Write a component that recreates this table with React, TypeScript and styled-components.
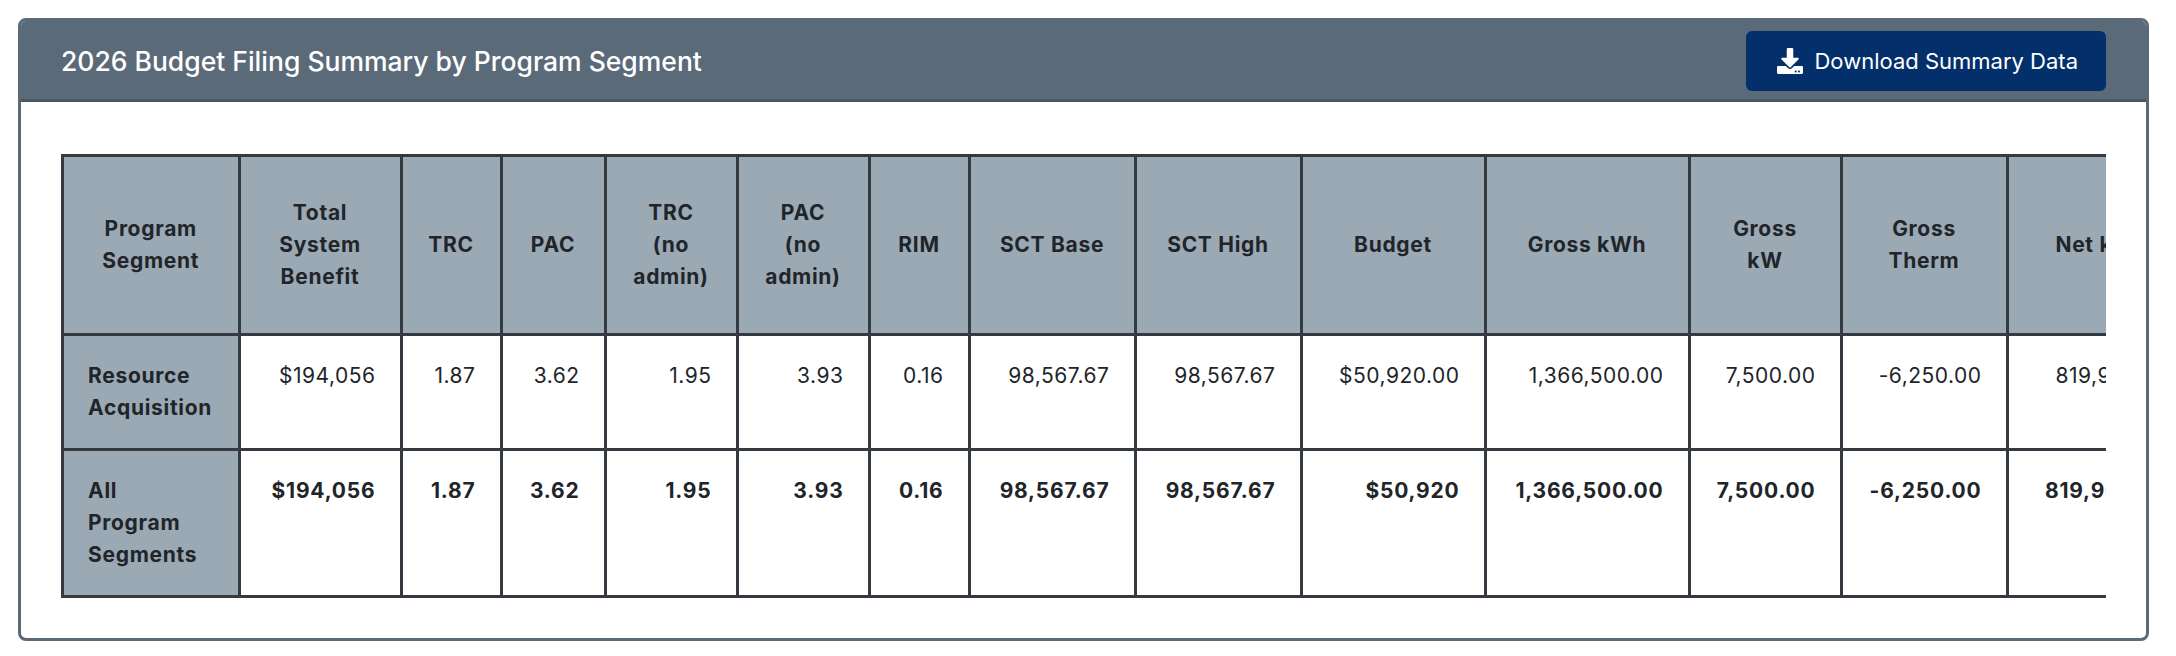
import React from "react";
import styled, { createGlobalStyle } from "styled-components";
import { FaDownload } from "react-icons/fa";

const GlobalStyle = createGlobalStyle`
  * { box-sizing: border-box; }
  body {
    margin: 0;
    background: #fff;
    font-family: Inter, "Noto Sans", "Liberation Sans", sans-serif;
    color: #212529;
  }
`;

const Page = styled.div`
  padding: 18px 27px 0 18px;
`;

const Card = styled.section`
  border: 3px solid #5b6a79;
  border-radius: 8px;
  overflow: hidden;
  background: #fff;
`;

const CardHeader = styled.header`
  display: flex;
  align-items: center;
  justify-content: space-between;
  padding: 10px 40px 8px 40px;
  background: #5b6a79;
  border-bottom: 3px solid #4a5663;
`;

const Title = styled.h2`
  margin: 0;
  color: #fff;
  font-size: 26.5px;
  font-weight: 500;
`;

const DownloadButton = styled.button`
  display: flex;
  align-items: center;
  gap: 11px;
  height: 60px;
  padding: 0 28px 0 31px;
  border: none;
  border-radius: 6px;
  background: #03306a;
  color: #fff;
  font-family: inherit;
  font-size: 22px;
  font-weight: 400;
  cursor: pointer;
  svg {
    width: 26px;
    height: 26px;
  }
`;

const CardBody = styled.div`
  padding: 52px 40px 40px 40px;
`;

const ScrollArea = styled.div`
  overflow-x: auto;
  scrollbar-width: none;
  &::-webkit-scrollbar {
    display: none;
  }
`;

const Table = styled.table<{ $width: number }>`
  width: ${(p) => p.$width}px;
  table-layout: fixed;
  border-collapse: collapse;
  font-size: 21px;
  line-height: 32px;
`;

const Col = styled.col<{ $w: number }>`
  width: ${(p) => p.$w}px;
`;

const HeadCell = styled.th`
  padding: 40px 24px;
  border: 3px solid #343a40;
  background: #9aa9b4;
  font-weight: 700;
  letter-spacing: 0.7px;
  text-align: center;
  vertical-align: middle;
  color: #212529;
`;

const SegmentCell = styled.th`
  padding: 24px;
  border: 3px solid #343a40;
  background: #9aa9b4;
  font-weight: 700;
  letter-spacing: 0.7px;
  text-align: left;
  vertical-align: top;
`;

const ValueCell = styled.td<{ $bold?: boolean }>`
  padding: 24px;
  border: 3px solid #343a40;
  text-align: right;
  vertical-align: top;
  white-space: nowrap;
  font-weight: ${(p) => (p.$bold ? 700 : 400)};
  letter-spacing: ${(p) => (p.$bold ? "0.8px" : "0.5px")};
`;

const columns: { label: string[]; width: number }[] = [
  { label: ["Program", "Segment"], width: 176.5 },
  { label: ["Total", "System", "Benefit"], width: 162 },
  { label: ["TRC"], width: 100 },
  { label: ["PAC"], width: 104 },
  { label: ["TRC", "(no", "admin)"], width: 132 },
  { label: ["PAC", "(no", "admin)"], width: 132 },
  { label: ["RIM"], width: 100 },
  { label: ["SCT Base"], width: 166 },
  { label: ["SCT High"], width: 166 },
  { label: ["Budget"], width: 184 },
  { label: ["Gross kWh"], width: 204 },
  { label: ["Gross", "kW"], width: 152 },
  { label: ["Gross", "Therm"], width: 166 },
  { label: ["Net kWh"], width: 190 },
  { label: ["Net", "kW"], width: 152 },
  { label: ["Net", "Therm"], width: 166 },
];

const rows: { segment: string[]; values: string[]; bold?: boolean }[] = [
  {
    segment: ["Resource", "Acquisition"],
    values: [
      "$194,056",
      "1.87",
      "3.62",
      "1.95",
      "3.93",
      "0.16",
      "98,567.67",
      "98,567.67",
      "$50,920.00",
      "1,366,500.00",
      "7,500.00",
      "-6,250.00",
      "819,900.00",
      "4,500.00",
      "-3,750.00",
    ],
  },
  {
    segment: ["All", "Program", "Segments"],
    bold: true,
    values: [
      "$194,056",
      "1.87",
      "3.62",
      "1.95",
      "3.93",
      "0.16",
      "98,567.67",
      "98,567.67",
      "$50,920",
      "1,366,500.00",
      "7,500.00",
      "-6,250.00",
      "819,900.00",
      "4,500.00",
      "-3,750.00",
    ],
  },
];

function Lines({ lines }: { lines: string[] }) {
  return (
    <>
      {lines.map((line, i) => (
        <React.Fragment key={line + i}>
          {i > 0 && <br />}
          {line}
        </React.Fragment>
      ))}
    </>
  );
}

function App() {
  const tableWidth = columns.reduce((sum, c) => sum + c.width, 0);

  return (
    <Page>
      <GlobalStyle />
      <Card>
        <CardHeader>
          <Title>2026 Budget Filing Summary by Program Segment</Title>
          <DownloadButton>
            <FaDownload />
            Download Summary Data
          </DownloadButton>
        </CardHeader>
        <CardBody>
          <ScrollArea>
            <Table $width={tableWidth}>
              <colgroup>
                {columns.map((c, i) => (
                  <Col key={i} $w={c.width} />
                ))}
              </colgroup>
              <thead>
                <tr>
                  {columns.map((c, i) => (
                    <HeadCell key={i}>
                      <Lines lines={c.label} />
                    </HeadCell>
                  ))}
                </tr>
              </thead>
              <tbody>
                {rows.map((row, r) => (
                  <tr key={r}>
                    <SegmentCell>
                      <Lines lines={row.segment} />
                    </SegmentCell>
                    {row.values.map((v, i) => (
                      <ValueCell key={i} $bold={row.bold}>
                        {v}
                      </ValueCell>
                    ))}
                  </tr>
                ))}
              </tbody>
            </Table>
          </ScrollArea>
        </CardBody>
      </Card>
    </Page>
  );
}

export default App;
